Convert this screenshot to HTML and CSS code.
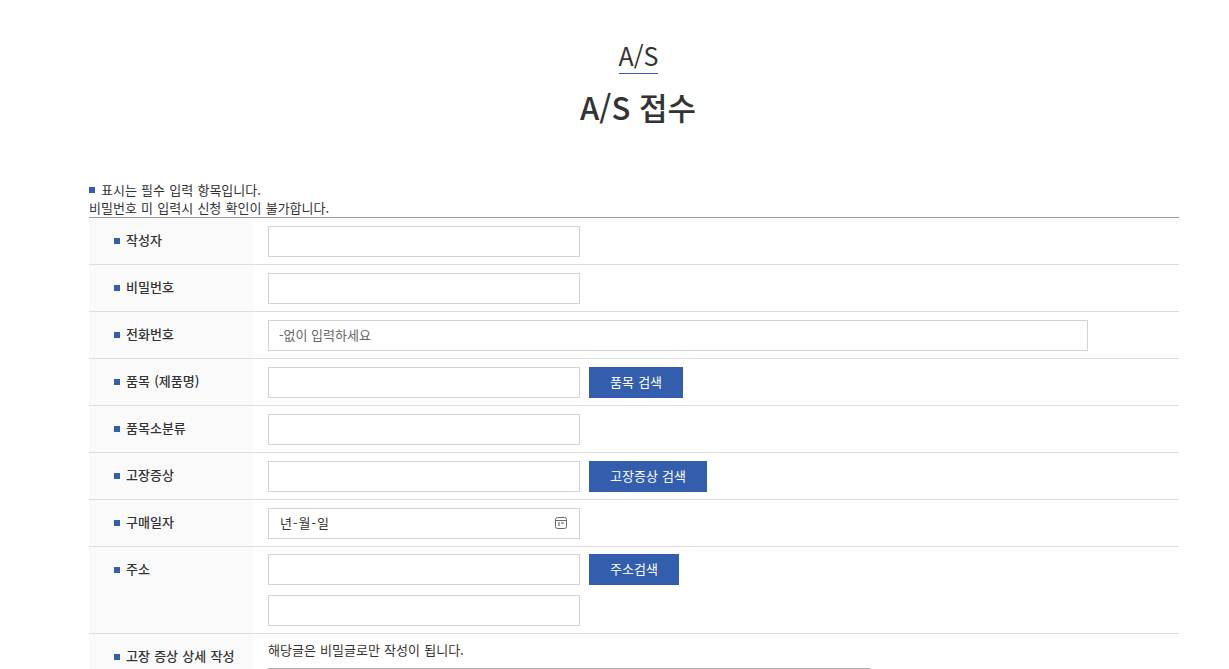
FILE: index.html
```html
<!DOCTYPE html>
<html lang="ko">
<head>
<meta charset="utf-8">
<title>A/S 접수</title>
<link rel="stylesheet" href="styles.css">
</head>
<body>
<div class="page">
  <header class="head">
    <p class="crumb">A/S</p>
    <h1 class="title">A/S 접수</h1>
  </header>
  <div class="notice">
    <p class="notice-line"><span class="mark mark-notice"></span>표시는 필수 입력 항목입니다.</p>
    <p class="notice-line">비밀번호 미 입력시 신청 확인이 불가합니다.</p>
  </div>
  <div class="form">
    <div class="row">
      <div class="label"><span class="mark"></span>작성자</div>
      <div class="field"><input class="input" type="text"></div>
    </div>
    <div class="row">
      <div class="label"><span class="mark"></span>비밀번호</div>
      <div class="field"><input class="input" type="password"></div>
    </div>
    <div class="row">
      <div class="label"><span class="mark"></span>전화번호</div>
      <div class="field"><input class="input input-wide" type="text" placeholder="-없이 입력하세요"></div>
    </div>
    <div class="row">
      <div class="label"><span class="mark"></span>품목 (제품명)</div>
      <div class="field"><input class="input" type="text"><button class="btn" type="button">품목 검색</button></div>
    </div>
    <div class="row">
      <div class="label"><span class="mark"></span>품목소분류</div>
      <div class="field"><input class="input" type="text"></div>
    </div>
    <div class="row">
      <div class="label"><span class="mark"></span>고장증상</div>
      <div class="field"><input class="input" type="text"><button class="btn" type="button">고장증상 검색</button></div>
    </div>
    <div class="row">
      <div class="label"><span class="mark"></span>구매일자</div>
      <div class="field">
        <div class="input date">
          <span class="date-text">년-월-일</span>
          <svg class="cal" width="12" height="12" viewBox="0 0 12 12" aria-hidden="true">
            <rect x="0.5" y="0.5" width="11" height="11" rx="2" fill="none" stroke="#666"/>
            <path d="M1 3.5h10" stroke="#666" fill="none"/>
            <path d="M3 5.5h2v1H3zM6 5.5h3v1H6zM3 7.5h2v1H3z" fill="#555"/>
          </svg>
        </div>
      </div>
    </div>
    <div class="row row-address">
      <div class="label"><span class="mark"></span>주소</div>
      <div class="field field-stack">
        <div class="line"><input class="input" type="text"><button class="btn" type="button">주소검색</button></div>
        <input class="input" type="text">
      </div>
    </div>
    <div class="row row-detail">
      <div class="label"><span class="mark"></span>고장 증상 상세 작성</div>
      <div class="field field-detail">
        <p class="hint">해당글은 비밀글로만 작성이 됩니다.</p>
        <div class="editor"></div>
      </div>
    </div>
  </div>
</div>
</body>
</html>
```
FILE: styles.css
```css
* { box-sizing: border-box; }
html, body { margin: 0; padding: 0; height: 669px; overflow: hidden; background: #fff; }
body { font-family: "Noto Sans CJK KR", "Noto Sans", sans-serif; font-size: 13px; color: #333; word-spacing: 0.6px; }
p, h1 { margin: 0; }
.page { width: 1090px; margin-left: 89px; }
.head { display: flex; flex-direction: column; align-items: center; padding: 37px 0 0 9px; height: 181px; word-spacing: 0; }
.crumb { font-size: 25px; font-weight: 400; line-height: 36px; height: 37px; border-bottom: 1px solid #335dad; color: #333; }
.title { font-size: 31px; font-weight: 500; line-height: 46px; margin: 10px 1px 0 0; color: #333; }
.notice { height: 36px; }
.notice-line { line-height: 18px; height: 18px; white-space: nowrap; }
.mark { display: inline-block; width: 6px; height: 6px; background: #335dad; margin-right: 6px; vertical-align: 1px; }
.mark-notice { vertical-align: 2px; }
.form { border-top: 1px solid #999; }
.row { display: flex; height: 47px; border-bottom: 1px solid #ddd; }
.label { width: 164px; background: #fafafa; padding-left: 25px; line-height: 43px; font-weight: 500; white-space: nowrap; }
.field { flex: 1; padding: 8px 0 0 15px; display: flex; align-items: flex-start; }
.input { display: block; width: 312px; height: 31px; border: 1px solid #d3d3d3; background: #fff; padding: 0 10px 2px; font: inherit; color: #333; border-radius: 0; outline: none; }
.input::placeholder { color: #666; opacity: 1; }
.input-wide { width: 820px; }
.date { display: flex; align-items: center; justify-content: space-between; padding: 0 12px 2px 11px; }
.date-text { letter-spacing: 1px; }
.cal { display: block; margin-top: 1px; }
.btn { height: 31px; margin-left: 9px; padding: 0 21px 2px; border: 0; background: #335dad; color: #fff; font: inherit; word-spacing: 0.6px; border-radius: 0; white-space: nowrap; }
.row-address { height: 87px; }
.field-stack { flex-direction: column; padding-top: 7px; }
.line { display: flex; margin-bottom: 10px; }
.row-detail { height: 200px; border-bottom: 0; }
.field-detail { flex-direction: column; padding-top: 6px; }
.hint { line-height: 20px; height: 28px; }
.editor { width: 602px; height: 160px; border-top: 1px solid #aaa; }
```
